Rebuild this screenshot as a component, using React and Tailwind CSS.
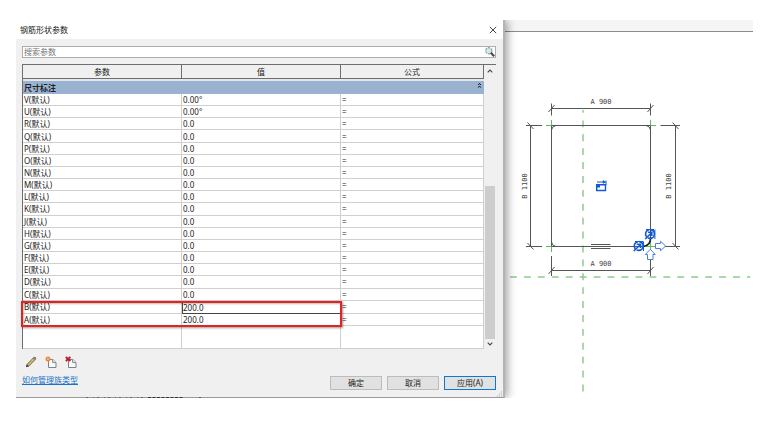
const rows = [
  ["V", "0.00°"],
  ["U", "0.00°"],
  ["R", "0.0"],
  ["Q", "0.0"],
  ["P", "0.0"],
  ["O", "0.0"],
  ["N", "0.0"],
  ["M", "0.0"],
  ["L", "0.0"],
  ["K", "0.0"],
  ["J", "0.0"],
  ["H", "0.0"],
  ["G", "0.0"],
  ["F", "0.0"],
  ["E", "0.0"],
  ["D", "0.0"],
  ["C", "0.0"],
  ["B", "200.0"],
  ["A", "200.0"],
];

function SearchIcon() {
  return (
    <svg viewBox="0 0 10 10" className="h-[10px] w-[10px]" aria-hidden="true">
      <circle cx="3.8" cy="3.8" r="3.1" fill="#d4eaea" stroke="#8aa3a3" strokeWidth="1.2" strokeDasharray="2.4 0.9" />
      <path d="M5.8 5.8L9.2 9.2" stroke="#484848" strokeWidth="2.2" />
    </svg>
  );
}

function PencilIcon() {
  return (
    <svg viewBox="0 0 12 12" className="h-3 w-3" aria-hidden="true">
      <path d="M2.8 9.4L9.6 2.4" stroke="#77705c" strokeWidth="3.2" strokeLinecap="round" />
      <path d="M3.2 9L8.8 3.2" stroke="#dcbc6c" strokeWidth="1.7" />
      <path d="M8.9 1.9L10.3 3.3" stroke="#8f8f98" strokeWidth="1.3" />
      <path d="M0.8 11.3L1.7 8.6L3.5 10.4Z" fill="#444" />
    </svg>
  );
}

function PageShape() {
  return (
    <>
      <path d="M3.5 3.5H7.8L11 6.5V11.5H3.5Z" fill="#fbfbfb" stroke="#7c8288" strokeWidth="1" />
      <path d="M7.6 3.5V6.6H11" fill="#dfe5ec" stroke="#7c8288" strokeWidth="0.9" />
    </>
  );
}

function NewIcon() {
  return (
    <svg viewBox="0 0 12 12" className="h-3 w-3" aria-hidden="true">
      <PageShape />
      <circle cx="3" cy="3" r="2.5" fill="#e88a3c" />
      <circle cx="3" cy="3" r="1" fill="#f8c080" />
    </svg>
  );
}

function DeleteIcon() {
  return (
    <svg viewBox="0 0 12 12" className="h-3 w-3" aria-hidden="true">
      <PageShape />
      <path d="M0.8 1L5.4 5M5.4 1L0.8 5" stroke="#bb1c24" strokeWidth="1.8" />
    </svg>
  );
}

function ParameterTable() {
  return (
    <div className="relative min-w-0 flex-1">
      <table className="w-full table-fixed border-separate border-spacing-0 border-l border-t border-[#6e6e6e] bg-white text-left">
        <colgroup>
          <col className="w-[34.5%]" />
          <col className="w-[34.5%]" />
          <col className="w-[31%]" />
        </colgroup>
        <thead>
          <tr className="h-[14px] bg-[#f0f0f0]">
            {["参数", "值", "公式"].map((title) => (
              <th
                key={title}
                scope="col"
                className="border-b border-r border-[#6e6e6e] p-0 text-center font-normal leading-[12px]"
              >
                {title}
              </th>
            ))}
          </tr>
        </thead>
        <tbody>
          <tr>
            <th
              colSpan={3}
              scope="colgroup"
              className="h-[15px] border-t-2 border-[#e3e8ee] bg-[#99b2d0] p-0 leading-[12px]"
            >
              <div className="flex justify-between pl-px pr-[2px] font-bold">
                尺寸标注
                <button type="button" aria-label="折叠" className="flex h-2">
                  <svg viewBox="0 0 5 7" className="h-[7px] w-[5px]" aria-hidden="true">
                    <path d="M1.2 3L2.5 1.4L3.8 3M1.2 5.6L2.5 4L3.8 5.6" fill="none" stroke="#111" />
                  </svg>
                </button>
              </div>
            </th>
          </tr>
        </tbody>
        <tbody className="h-[232px]">
          {rows.map(([name, value]) => (
            <tr key={name} className="leading-[11px]">
              <th scope="row" className="border-b border-r border-[#cfcfcf] p-0 pl-px font-normal">
                {name}(默认)
              </th>
              <td
                className={
                  name === "B"
                    ? "border border-r-0 border-[#444] p-0"
                    : "border-b border-r border-[#cfcfcf] p-0 pl-px"
                }
              >
                {value}
              </td>
              <td className="border-b border-r border-[#cfcfcf] p-0 pl-px">=</td>
            </tr>
          ))}
        </tbody>
        <tbody>
          <tr className="h-[23px]">
            <td className="border-b border-r border-[#cfcfcf] p-0" />
            <td className="border-b border-r border-[#cfcfcf] p-0" />
            <td className="border-b border-r border-[#cfcfcf] p-0" />
          </tr>
        </tbody>
      </table>
      <div className="pointer-events-none absolute -left-px bottom-[22px] h-[26px] w-[calc(69%+2px)] border-2 border-[#e32222] shadow-[1px_1px_2px_#0006,inset_1px_1px_2px_#0004]" />
    </div>
  );
}

function ScrollBar() {
  return (
    <div className="flex w-3 flex-col items-center border-t border-[#6e6e6e] bg-[#f0f0f0]">
      <button type="button" aria-label="向上" className="flex h-3 w-full items-center justify-center">
        <svg viewBox="0 0 6 4" className="h-1 w-[6px]" aria-hidden="true">
          <path d="M0.7 3.3L3 1L5.3 3.3" fill="none" stroke="#444" strokeWidth="1.1" />
        </svg>
      </button>
      <div className="flex w-full flex-1 flex-col items-center">
        <div className="flex-[109]" />
        <div className="w-[10px] flex-[152] bg-[#cdcdcd]" />
      </div>
      <button type="button" aria-label="向下" className="flex h-[10px] w-full items-center justify-center">
        <svg viewBox="0 0 6 4" className="h-1 w-[6px]" aria-hidden="true">
          <path d="M0.7 0.7L3 3L5.3 0.7" fill="none" stroke="#444" strokeWidth="1.1" />
        </svg>
      </button>
    </div>
  );
}

function Dialog() {
  return (
    <section
      aria-labelledby="dialog-title"
      className="relative z-10 flex min-w-0 flex-1 flex-col border-b border-r-2 border-b-[#999] border-r-[#b4b4b4] bg-[#f0f0f0] shadow-[2px_0_9px_#0006]"
    >
      <header className="flex h-[19px] items-center justify-between bg-white pl-1 pr-[6px]">
        <h1 id="dialog-title" className="leading-[12px]">
          钢筋形状参数
        </h1>
        <button type="button" aria-label="关闭" className="flex">
          <svg viewBox="0 0 8 8" className="h-2 w-2" aria-hidden="true">
            <path d="M0.8 0.8L7.2 7.2M7.2 0.8L0.8 7.2" stroke="#333" strokeWidth="0.9" />
          </svg>
        </button>
      </header>
      <div className="flex flex-col pl-[6px] pr-[7px] pt-[7px]">
        <div className="flex h-3 items-center border border-[#adadad] bg-white">
          <input
            type="text"
            aria-label="搜索参数"
            placeholder="搜索参数"
            className="h-[10px] min-w-0 flex-1 bg-transparent pl-px leading-[10px] outline-none placeholder:text-[#777]"
          />
          <SearchIcon />
        </div>
        <div className="mt-[6px] flex">
          <ParameterTable />
          <ScrollBar />
        </div>
        <div className="mt-[7px] flex gap-2 pl-[3px]">
          <button type="button" aria-label="编辑参数" className="flex w-3">
            <PencilIcon />
          </button>
          <button type="button" aria-label="新建参数" className="flex w-3">
            <NewIcon />
          </button>
          <button type="button" aria-label="删除参数" className="flex w-3">
            <DeleteIcon />
          </button>
        </div>
        <div className="mt-[6px] flex items-start justify-between">
          <a href="#types" className="leading-[12px] text-[#1b74c9] underline">
            如何管理族类型
          </a>
          <div className="mb-[7px] mt-[2px] flex gap-[5px]">
            <button type="button" className="h-[14px] w-[52px] border border-[#bcbcbc] bg-[#e1e1e1] leading-[12px]">
              确定
            </button>
            <button type="button" className="h-[14px] w-[52px] border border-[#bcbcbc] bg-[#e1e1e1] leading-[12px]">
              取消
            </button>
            <button type="button" className="h-[14px] w-[52px] border border-[#0a78d6] bg-[#e1e1e1] leading-[12px]">
              应用(A)
            </button>
          </div>
        </div>
      </div>
      <svg viewBox="0 0 6 6" className="absolute bottom-0 right-0 h-[6px] w-[6px]" aria-hidden="true">
        <path d="M4 1h1M2 3h1M4 3h1M0 5h1M2 5h1M4 5h1" stroke="#a8a8a8" strokeWidth="1" />
      </svg>
      <svg viewBox="0 0 116 1" className="absolute -bottom-px left-[70px] h-px w-[116px]" aria-hidden="true">
        <path d="M0 0.5H60" stroke="#666" strokeDasharray="2 5 1 3" />
        <path d="M62 0.5H98" stroke="#333" strokeDasharray="3 1.5" />
        <path d="M113 0.5H115" stroke="#555" />
      </svg>
    </section>
  );
}

function Sketch() {
  return (
    <svg viewBox="505 32 248 366" className="block h-[366px] w-[248px]" role="img" aria-label="钢筋形状">
      <g fill="none" stroke="#8fcb8f" strokeWidth="1.5">
        <path d="M583 110V112.8" />
        <path d="M583 120.4V392" strokeDasharray="6.9 7" />
        <path d="M510 277H750.3" strokeDasharray="6.9 7.04" />
      </g>
      <g fill="none" stroke="#555" strokeWidth="1">
        <path d="M551.5 125.5H650.5V246.5H551.5Z" />
        <path d="M551.5 130Q552 126 556 125.5M646 125.5Q650 126 650.5 130M551.5 242Q552 246 556 246.5" />
        <path d="M551.5 108.5H650.5M551.5 103.5V115.5M650.5 103.5V115.5" />
        <path d="M551.5 270.5H650.5M551.5 256V276M650.5 256V276" />
        <path d="M530.5 125.5V246.5M526 125.5H542M526 246.5H542" />
        <path d="M675.5 125.5V246.5M660.5 125.5H680M660.5 246.5H680" />
        <path d="M548.5 112L554.5 105M647.5 112L653.5 105M548.5 274L554.5 267M647.5 274L653.5 267" />
        <path d="M527.5 122.5L533.5 129M527.5 243L533.5 249.5M672.5 122.5L678.5 129M672.5 243L678.5 249.5" />
        <path d="M591 244.5H610.5M591 248.5H610.5" />
      </g>
      <path
        d="M546 125.5H551M551.5 120V125M651 125.5H656M650.5 120V125M546 246.5H551M551.5 247V252M645 246.5H656M650.5 241V252"
        fill="none"
        stroke="#5dbb5d"
      />
      <path d="M650.5 237C651 243 648 246 643 246.5" fill="none" stroke="#222" strokeWidth="1.6" />
      <g fill="none" stroke="#1259d6">
        <path d="M596.7 184.7H605.5V190.5H596.7Z" strokeWidth="1.4" />
        <path d="M597 182H605.5M606 180.5V185" strokeWidth="1" />
        <path d="M603 180.5L605.5 182L603 183.5Z" fill="#1259d6" strokeWidth="0.5" />
        <path d="M597 184.5H600V187.5H597Z" fill="#1259d6" stroke="none" />
        <circle cx="650" cy="234" r="4.4" strokeWidth="1.6" strokeDasharray="9 1.4" />
        <path d="M645.2 239L651.5 232.7M648 232.3H651.8V236" strokeWidth="1.6" />
        <path d="M654.9 229.5V239M646 229.5H654" strokeWidth="1" />
        <circle cx="638.7" cy="246" r="4.4" strokeWidth="1.6" strokeDasharray="9 1.4" />
        <path d="M633.8 251L640.2 244.7M636.7 244.3H640.5V248" strokeWidth="1.6" />
        <path d="M643.5 241.5V251M635 241.5H643" strokeWidth="1" />
      </g>
      <g fill="#fff" stroke="#4a7de2" strokeWidth="1">
        <path d="M655.5 243.5H660.5V241.3L665.7 246L660.5 250.7V248.5H655.5Z" />
        <path d="M647.5 259.5V254.5H645.3L650.3 249.3L655.3 254.5H653V259.5Z" />
      </g>
      <g fill="#444" fontSize="7" textAnchor="middle" className="font-['DejaVu_Sans_Mono',monospace]">
        <text x="601" y="104">A 900</text>
        <text x="601" y="266">A 900</text>
        <text transform="translate(527 186) rotate(-90)">B 1100</text>
        <text transform="translate(671 186) rotate(-90)">B 1100</text>
      </g>
    </svg>
  );
}

export default function App() {
  return (
    <main className="bg-white pl-4 pr-[19px] pt-5 font-['Noto_Sans','Noto_Sans_CJK_SC',sans-serif] text-[8px] text-[#222]">
      <div className="flex overflow-hidden">
        <Dialog />
        <div className="w-[248px] shrink-0">
          <div className="h-3 border-b border-[#8c8c8c] bg-[#f5f5f5]" />
          <Sketch />
        </div>
      </div>
    </main>
  );
}
